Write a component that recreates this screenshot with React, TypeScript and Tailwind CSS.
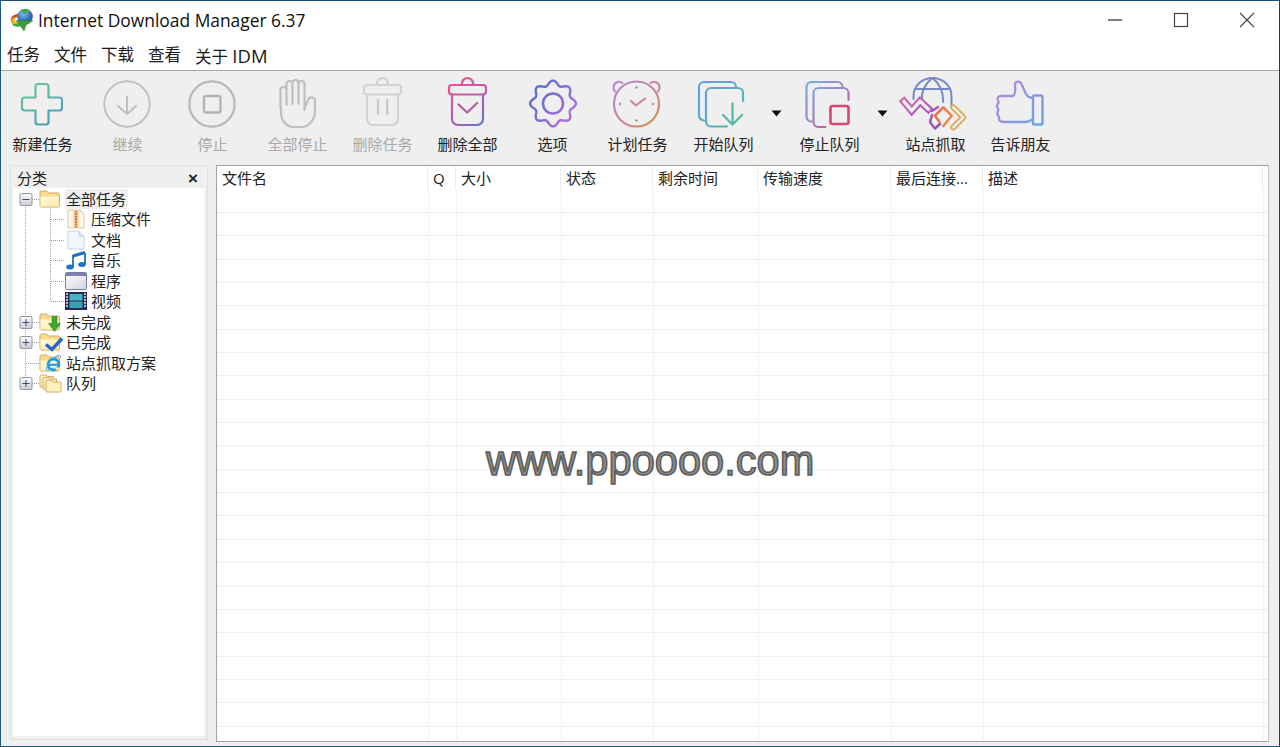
import React from "react";

const SANS = "[font-family:'Open_Sans','Noto_Sans_CJK_SC',sans-serif]";

function Grad({ id, a, b, c }: { id: string; a: string; b: string; c?: string }) {
  return (
    <defs>
      <linearGradient id={id} gradientUnits="userSpaceOnUse" x1="6" y1="4" x2="54" y2="52">
        <stop offset="0" stopColor={a} />
        {c ? <stop offset="0.5" stopColor={c} /> : null}
        <stop offset="1" stopColor={b} />
      </linearGradient>
    </defs>
  );
}

function Ico({ children, dx = 0 }: { children: React.ReactNode; dx?: number }) {
  return (
    <svg width="60" height="56" viewBox={`${-dx} 0 60 56`} fill="none" strokeLinecap="round" strokeLinejoin="round" className="overflow-visible">
      {children}
    </svg>
  );
}

const PlusIcon = () => (
  <Ico dx={-1}>
    <defs>
      <linearGradient id="gPlus" gradientUnits="userSpaceOnUse" x1="15" y1="8" x2="40" y2="50">
        <stop offset="0" stopColor="#6cc6a0" />
        <stop offset="1" stopColor="#4a9db8" />
      </linearGradient>
    </defs>
    <path
      d="M26 8h8a2.5 2.5 0 0 1 2.5 2.5V21.5H47.5a2.5 2.5 0 0 1 2.5 2.5v8a2.5 2.5 0 0 1-2.5 2.5H36.5V46a2.5 2.5 0 0 1-2.5 2.5h-8a2.5 2.5 0 0 1-2.5-2.5V34.5H12.5A2.5 2.5 0 0 1 10 32v-8a2.5 2.5 0 0 1 2.5-2.5H23.5V10.5A2.5 2.5 0 0 1 26 8z"
      stroke="url(#gPlus)"
      strokeWidth="2.2"
    />
  </Ico>
);

const ResumeIcon = () => (
  <Ico dx={-1}>
    <circle cx="30" cy="28" r="22.7" stroke="#c2c2c2" strokeWidth="2" />
    <path d="M30 20.5V38M21 30l9 8 9-8" stroke="#bfbfbf" strokeWidth="2" />
  </Ico>
);

const StopIcon = () => (
  <Ico dx={-0.5}>
    <circle cx="29.5" cy="28" r="22.7" stroke="#b8b8b8" strokeWidth="2.2" />
    <rect x="21.5" y="20" width="16.5" height="16.5" rx="2" stroke="#b5b5b5" strokeWidth="2.4" />
  </Ico>
);

const HandIcon = () => (
  <Ico dx={-1}>
    <path
      d="M13.5 33V14a3 3 0 0 1 6 0V29M19.5 14V8a3 3 0 0 1 6 0V28M25.5 8V7a3 3 0 0 1 6 0V28M31.5 8a3 3 0 0 1 6 0V29M37.5 11V34M37.5 32l4-9c1.200-2.600 6.500-2 6.500 1.500V35c0 9-6 16-14 16h-7c-7 0-13-6-13-14V31"
      stroke="#bfbfbf"
      strokeWidth="2.2"
    />
  </Ico>
);

const TrashLines = ({ stroke, width = 2.2 }: { stroke: string; width?: number }) => (
  <>
    <path d="M24.500 8.500v-1a5.500 5.500 0 0 1 11 0v1" stroke={stroke} strokeWidth={width} />
    <rect x="11.500" y="9" width="37" height="9.500" rx="3" stroke={stroke} strokeWidth={width} />
    <path d="M14.500 18.500V43a6 6 0 0 0 6 6h19a6 6 0 0 0 6-6V18.500" stroke={stroke} strokeWidth={width} />
  </>
);

const TrashIcon = () => (
  <Ico dx={-0.5}>
    <TrashLines stroke="#d2d2d2" />
    <path d="M25.500 24v14M34.700 24v14" stroke="#c8c8c8" strokeWidth="2.4" />
  </Ico>
);

const TrashAllIcon = () => (
  <Ico dx={-0.5}>
    <defs>
      <linearGradient id="gTrash" gradientUnits="userSpaceOnUse" x1="12" y1="6" x2="46" y2="50">
        <stop offset="0" stopColor="#f4508a" />
        <stop offset="0.5" stopColor="#bc5cae" />
        <stop offset="1" stopColor="#5c78cc" />
      </linearGradient>
    </defs>
    <TrashLines stroke="url(#gTrash)" />
    <path d="M21 28.500l8.700 8 10-9.500" stroke="#b25ca8" strokeWidth="2.200" />
  </Ico>
);

function gearPath() {
  const pts: string[] = [];
  for (let i = 0; i <= 192; i++) {
    const t = (i / 192) * Math.PI * 2;
    const r = 20.6 + 2.3 * Math.cos(8 * t);
    pts.push(`${(30 + r * Math.cos(t)).toFixed(2)} ${(27.5 + r * Math.sin(t)).toFixed(2)}`);
  }
  return "M" + pts.join("L") + "Z";
}

const GearIcon = () => (
  <Ico>
    <defs>
      <linearGradient id="gGear" gradientUnits="userSpaceOnUse" x1="6" y1="10" x2="54" y2="46">
        <stop offset="0" stopColor="#4f70c0" />
        <stop offset="1" stopColor="#bb70e4" />
      </linearGradient>
    </defs>
    <path d={gearPath()} stroke="url(#gGear)" strokeWidth="2.4" />
    <circle cx="30" cy="27.500" r="10" stroke="url(#gGear)" strokeWidth="2.600" />
  </Ico>
);

const ClockIcon = () => (
  <Ico dx={-1.5}>
    <defs>
      <linearGradient id="gClock" gradientUnits="userSpaceOnUse" x1="8" y1="4" x2="52" y2="52">
        <stop offset="0" stopColor="#b588d8" />
        <stop offset="0.55" stopColor="#c58a9c" />
        <stop offset="1" stopColor="#d99045" />
      </linearGradient>
    </defs>
    <circle cx="30" cy="28" r="22.500" stroke="url(#gClock)" strokeWidth="2.200" />
    <path d="M8.500 15.500a5.500 5.500 0 0 1-1.500-5 5.600 5.600 0 0 1 9-3.500M44 7a5.600 5.600 0 0 1 9 3.500 5.500 5.500 0 0 1-1.500 5" stroke="url(#gClock)" strokeWidth="2.200" />
    <path d="M24.500 25l5 4.500 9-7" stroke="#c58a9c" strokeWidth="2.200" />
    <circle cx="30" cy="11.500" r="1.200" fill="#b88ab8" />
    <circle cx="30" cy="44.500" r="1.200" fill="#c88a80" />
    <circle cx="13.500" cy="28" r="1.200" fill="#b98ab8" />
    <circle cx="46.500" cy="28" r="1.200" fill="#c88a80" />
  </Ico>
);

const StartQueueIcon = () => (
  <Ico>
    <Grad id="gStart" a="#5fa0e2" b="#52bca0" />
    <path d="M10 44.500a5 5 0 0 1-5-5V11a5 5 0 0 1 5-5h27a5 5 0 0 1 5 5" stroke="url(#gStart)" strokeWidth="2.200" />
    <path d="M33 50.500H17a5 5 0 0 1-5-5V17a5 5 0 0 1 5-5h27a5 5 0 0 1 5 5v8" stroke="url(#gStart)" strokeWidth="2.200" />
    <path d="M38.500 27.500V48M29 39l9.500 9.500L48 39" stroke="#55b8a2" strokeWidth="2.200" />
  </Ico>
);

const StopQueueIcon = () => (
  <Ico dx={-0.5}>
    <defs>
      <linearGradient id="gStopQ" gradientUnits="userSpaceOnUse" x1="6" y1="4" x2="50" y2="52">
        <stop offset="0" stopColor="#6fb2e6" />
        <stop offset="0.5" stopColor="#a086c4" />
        <stop offset="1" stopColor="#e0406e" />
      </linearGradient>
    </defs>
    <path d="M12 45.500a5 5 0 0 1-5-5V11a5 5 0 0 1 5-5h26a5 5 0 0 1 5 5" stroke="url(#gStopQ)" strokeWidth="2.200" />
    <path d="M49 24v-7a5 5 0 0 0-5-5H19a5 5 0 0 0-5 5v29a5 5 0 0 0 5 5h7" stroke="url(#gStopQ)" strokeWidth="2.200" />
    <rect x="31" y="30" width="18" height="18" rx="2" stroke="#d8466f" strokeWidth="2.600" />
  </Ico>
);

const GrabberIcon = () => (
  <Ico dx={-1}>
    <defs>
      <linearGradient id="gZig" gradientUnits="userSpaceOnUse" x1="0" y1="22" x2="32" y2="52">
        <stop offset="0" stopColor="#cc64b4" />
        <stop offset="1" stopColor="#9a50bc" />
      </linearGradient>
      <linearGradient id="gChev" gradientUnits="userSpaceOnUse" x1="30" y1="32" x2="60" y2="52">
        <stop offset="0" stopColor="#ee6448" />
        <stop offset="1" stopColor="#e2ae58" />
      </linearGradient>
    </defs>
    <path d="M8.500 23V20a19 18 0 0 1 38 0V31M27.500 2C21 7 16.700 15 16.700 23M27.500 2C34 7 38.300 16 38.300 26M11.700 13H43.300" stroke="#7488c8" strokeWidth="2" />
    <path d="M-1 25.500L6.700 34.700 15 25.300 23.300 33" stroke="url(#gZig)" strokeWidth="7.500" strokeLinecap="square" strokeLinejoin="miter" />
    <path d="M-1 25.500L6.700 34.700 15 25.300 23.300 33" stroke="#efefef" strokeWidth="3.400" strokeLinecap="square" strokeLinejoin="miter" />
    <path d="M27 35L33 31M27 39L25 46.300 30 52.500 35 48" stroke="url(#gZig)" strokeWidth="2.500" />
    <path d="M48.300 31.300L58.300 41.300 48.300 51.300" stroke="#e0a858" strokeWidth="6" />
    <path d="M48.300 31.300L58.300 41.300 48.300 51.300" stroke="#efefef" strokeWidth="2.400" />
    <path d="M34.500 46L30 39.700 38.300 31.300 46.700 39.700 38.300 50" stroke="url(#gChev)" strokeWidth="2.500" />
  </Ico>
);

const ThumbIcon = () => (
  <Ico dx={-1}>
    <defs>
      <linearGradient id="gThumb" gradientUnits="userSpaceOnUse" x1="8" y1="8" x2="54" y2="46">
        <stop offset="0" stopColor="#bb88d4" />
        <stop offset="1" stopColor="#66a4ea" />
      </linearGradient>
    </defs>
    <rect x="43" y="19.500" width="9.500" height="29" rx="1.500" stroke="url(#gThumb)" strokeWidth="2.400" />
    <path
      d="M43 21.500c-3.500 1-5.500-.5-7.500-4.500l-4-9c-1.500-3.500-6.500-3-6.500 1 0 4 1.500 8-2 11H11c-3 0-4 2.500-3 5 1 1 1 1.500 0 2.500-1.500 2-1 4 0 5 .5 1 .5 1.500 0 2.500-1 2-.5 4 .5 5 .5 1 .5 1.500 .5 2.500 0 2 2 3.500 5 3.500H35c4 0 5-1.500 8-3"
      stroke="url(#gThumb)"
      strokeWidth="2.300"
    />
  </Ico>
);

function ToolItem({ label, icon, disabled, first }: { label: string; icon: React.ReactNode; disabled?: boolean; first?: boolean }) {
  return (
    <div className={`w-[85px] shrink-0 flex flex-col items-center ${first ? "ml-[1px]" : ""}`}>
      {icon}
      <span className={`mt-[1px] text-[15px] leading-[22px] whitespace-nowrap ${disabled ? "text-[#a9a9a9]" : "text-[#222]"}`}>{label}</span>
    </div>
  );
}

function DropArrow() {
  return (
    <div className="w-[21px] shrink-0 flex justify-center pt-[34px]">
      <svg width="12" height="7" viewBox="0 0 12 7" className="-translate-x-[0.5px]"><path d="M1 0.500h10L6 6.500z" fill="#111" /></svg>
    </div>
  );
}

const FolderBase = () => (
  <>
    <path d="M1 16V3.500A1.500 1.500 0 0 1 2.500 2h5l2 2h9.500A1.500 1.500 0 0 1 20.500 5.500V16.500a1.500 1.500 0 0 1-1.500 1.500h-16A1.500 1.500 0 0 1 1 16.500z" fill="#f7dc8e" stroke="#cfa85e" />
    <path d="M1.500 7.500h18.500v9.500a.5.5 0 0 1-.5.5h-17.500a.5.5 0 0 1-.5-.5z" fill="url(#gFolderFront)" />
    <defs>
      <linearGradient id="gFolderFront" x1="0" y1="0" x2="1" y2="1">
        <stop offset="0" stopColor="#fffbe2" />
        <stop offset="1" stopColor="#fbe9a4" />
      </linearGradient>
    </defs>
  </>
);

const TreeSvg = ({ children, w = 22 }: { children: React.ReactNode; w?: number }) => (
  <svg width={w} height="20" viewBox={`0 0 ${w} 20`} className="shrink-0 overflow-visible">{children}</svg>
);

const FolderIcon = () => <TreeSvg><FolderBase /></TreeSvg>;

const DownFolder = () => (
  <TreeSvg>
    <FolderBase />
    <path d="M13 4.500h5v7h3.500L15.500 19.500l-6-8H13z" fill="#3fa535" stroke="#2c7d26" strokeWidth="0.500" />
  </TreeSvg>
);

const DoneFolder = () => (
  <TreeSvg>
    <FolderBase />
    <path d="M7 12.500l6 5L23 6.500" fill="none" stroke="#2d62c8" strokeWidth="3.400" />
  </TreeSvg>
);

const IeFolder = () => (
  <TreeSvg>
    <FolderBase />
    <circle cx="14.500" cy="11.500" r="5.400" fill="none" stroke="#1f96e0" strokeWidth="2.800" />
    <path d="M9 11.800h11" stroke="#1f96e0" strokeWidth="2" />
    <path d="M16.500 15.500h6" stroke="#fbe9a4" strokeWidth="2.200" />
    <path d="M21 5c1.500-2 0-3.500-3-2-5 2.500-9 7-10.500 12-.5 2 .5 3 3 2" stroke="#3fa8ea" fill="none" />
  </TreeSvg>
);

const StackFolder = () => (
  <TreeSvg>
    <path d="M1 3.500A1.500 1.500 0 0 1 2.500 2h5l1 1.500h6V14H1z" fill="#fbeeb8" stroke="#d3ac62" />
    <path d="M4 6A1.500 1.500 0 0 1 5.500 4.500h5l1 1.500h6V16H4z" fill="#fbeeb8" stroke="#d3ac62" />
    <path d="M7 8A1 1 0 0 1 8 7h4l2 2h7a1 1 0 0 1 1 1v8a1 1 0 0 1-1 1H8a1 1 0 0 1-1-1z" fill="#fff3bd" stroke="#d3ac62" />
  </TreeSvg>
);

const ZipIcon = () => (
  <TreeSvg w={20}>
    <path d="M2 1H14l4 4v14H2z" fill="#fff8ea" stroke="#d9c6a2" />
    <path d="M7.500 1.500h5V19h-5z" fill="#f0c890" />
    <path d="M10 2v16" stroke="#c7642c" strokeWidth="1.800" strokeDasharray="1.500 1" />
  </TreeSvg>
);

const DocIcon = () => (
  <TreeSvg w={20}>
    <path d="M2 1h11l5 5V19H2z" fill="#f3f6fc" stroke="#c6d0e2" />
    <path d="M13 1v5h5" fill="#dfe6f2" stroke="#c6d0e2" />
  </TreeSvg>
);

const MusicIcon = () => (
  <TreeSvg w={20}>
    <path d="M7 6l12-3.500" fill="none" stroke="#1f6fc0" strokeWidth="3" />
    <path d="M7 5v12M19 3v11" fill="none" stroke="#1f6fc0" strokeWidth="1.800" />
    <ellipse cx="4" cy="17" rx="3.800" ry="2.500" fill="#1b76c8" />
    <ellipse cx="16" cy="14.500" rx="3.800" ry="2.500" fill="#1b76c8" />
  </TreeSvg>
);

const ProgIcon = () => (
  <TreeSvg>
    <defs>
      <linearGradient id="gProg" x1="0" y1="0" x2="1" y2="1">
        <stop offset="0" stopColor="#ffffff" />
        <stop offset="1" stopColor="#d4d4e0" />
      </linearGradient>
    </defs>
    <rect x="0.500" y="1.500" width="21" height="17" rx="1" fill="url(#gProg)" stroke="#7a7aa0" />
    <rect x="1" y="2" width="20" height="3" fill="#7a80b0" />
  </TreeSvg>
);

const FilmIcon = () => (
  <TreeSvg>
    <rect x="0" y="1" width="22" height="18" fill="#2a2a5a" />
    <rect x="4.500" y="3" width="13" height="6.500" fill="#45b5c0" />
    <rect x="4.500" y="10.500" width="13" height="6.500" fill="#36a4b0" />
    <path d="M1 3h2M1 6h2M1 9h2M1 12h2M1 15h2M19 3h2M19 6h2M19 9h2M19 12h2M19 15h2" stroke="#d8e4f0" strokeWidth="1.300" />
  </TreeSvg>
);

function Guide({ level, expander, end, lastChild }: { level: 0 | 1; expander?: "plus" | "minus"; end?: boolean; lastChild?: boolean }) {
  const w = level === 0 ? 25 : 51;
  const dot = { stroke: "#a3a3a3", strokeWidth: 1, strokeDasharray: "1 1", fill: "none" };
  return (
    <svg width={w} height="20.5" viewBox={`0 0 ${w} 20.5`} className="shrink-0">
      <path d={end ? "M11.500 0V10" : level === 0 && expander === "minus" ? "M11.500 10V20.5" : "M11.500 0V20.5"} {...dot} />
      {level === 0 ? <path d="M12 10.500H25" {...dot} /> : <path d={`M36.500 0V${lastChild ? 10.5 : 20.5}M37 10.500H51`} {...dot} />}
      {expander ? (
        <>
          <defs>
            <linearGradient id="gBox" x1="0" y1="0" x2="0" y2="1">
              <stop offset="0" stopColor="#ffffff" />
              <stop offset="1" stopColor="#c8ccd4" />
            </linearGradient>
          </defs>
          <rect x="6" y="4.500" width="12" height="12" rx="1.500" fill="url(#gBox)" stroke="#8f949e" />
          <path d={expander === "plus" ? "M8.500 10.500h7M12 7v7" : "M8.500 10.500h7"} stroke="#34507a" strokeWidth="1" />
        </>
      ) : null}
    </svg>
  );
}

function TreeRow({ level, expander, end, lastChild, icon, label, selected }: { level: 0 | 1; expander?: "plus" | "minus"; end?: boolean; lastChild?: boolean; icon: React.ReactNode; label: string; selected?: boolean }) {
  return (
    <div className="flex items-center h-[20.5px]">
      <Guide level={level} expander={expander} end={end} lastChild={lastChild} />
      <div className={`${level === 0 ? "w-[22px]" : "w-[21px]"} shrink-0 flex justify-center`}>{icon}</div>
      <span className={`ml-[4px] pl-[1px] pr-[2px] text-[15px] leading-[20px] text-[#222] whitespace-nowrap ${selected ? "bg-[#f0f0f0]" : ""}`}>{label}</span>
    </div>
  );
}

const cols = [
  { w: "w-[211px]", t: "文件名" },
  { w: "w-[28px]", t: "Q" },
  { w: "w-[105px]", t: "大小" },
  { w: "w-[92px]", t: "状态" },
  { w: "w-[105px]", t: "剩余时间" },
  { w: "w-[133px]", t: "传输速度" },
  { w: "w-[92px]", t: "最后连接..." },
  { w: "w-[280px]", t: "描述" },
];

function Logo() {
  return (
    <svg width="24" height="24" viewBox="0 0 24 24" className="shrink-0">
      <defs>
        <radialGradient id="gGlobe" cx="0.4" cy="0.3" r="0.8">
          <stop offset="0" stopColor="#8cc0ee" />
          <stop offset="0.6" stopColor="#2f6bb5" />
          <stop offset="1" stopColor="#1c4f96" />
        </radialGradient>
      </defs>
      <path d="M9 6C3 6 0 10 1 14c.8 3 4 4.500 8 4l4-4c-4 1-7 .5-8-1-1-2 1-4 5-4z" fill="#e8b020" />
      <path d="M9 6C3 6 0 10 1 14c-.5-3 3-6 9-5.500z" fill="#d23b2a" />
      <path d="M2 16.500c2 2 5 2.500 8 2l3-4c-4 1-8 1.500-11 2z" fill="#42a845" />
      <circle cx="15" cy="8.500" r="7.800" fill="url(#gGlobe)" />
      <path d="M12 2c2-1.500 5-1.500 7 0 1 2-1 3-3 3-1 2.500-4 1.500-4-3z" fill="#4aa84a" />
      <path d="M6 12.500h17l-7 4.500-2 6-3.500-5z" fill="#3c9a3a" stroke="#2a7d2c" strokeWidth="0.500" />
    </svg>
  );
}

export default function App() {
  return (
    <div className={`w-[1280px] h-[747px] flex flex-col bg-[#efefef] border border-[#1c5a80] border-r-[#1c3f66] border-t-[#1c4a70] overflow-hidden ${SANS}`}>
      <div className="h-[38px] bg-white flex items-center pl-[9px] shrink-0">
        <Logo />
        <span className="ml-[4px] mt-[1px] text-[17.400px] text-[#111] whitespace-nowrap">Internet Download Manager 6.37</span>
        <div className="ml-auto flex items-center">
          <svg width="16" height="16" viewBox="0 0 16 16" className="mr-[50px]"><path d="M1 8h14" stroke="#555" strokeWidth="1.500" /></svg>
          <svg width="16" height="16" viewBox="0 0 16 16" className="mr-[50px]"><rect x="1.500" y="1.500" width="13" height="13" fill="none" stroke="#444" strokeWidth="1.200" /></svg>
          <svg width="16" height="16" viewBox="0 0 16 16" className="mr-[24px]"><path d="M1 1l14 14M15 1L1 15" stroke="#444" strokeWidth="1.100" /></svg>
        </div>
      </div>
      <div className="h-[32px] bg-white flex items-center pl-[6px] pt-[2px] gap-[14px] border-b border-[#a6a6a6] shrink-0 text-[16.500px] text-[#1a1a1a]">
        <span>任务</span>
        <span>文件</span>
        <span>下载</span>
        <span>查看</span>
        <span>关于 <span className="text-[18.500px]">IDM</span></span>
      </div>
      <div className="h-[94px] shrink-0 flex pt-[5px] -ml-[1px]">
        <ToolItem label="新建任务" icon={<PlusIcon />} />
        <ToolItem label="继续" icon={<ResumeIcon />} disabled />
        <ToolItem label="停止" icon={<StopIcon />} disabled />
        <ToolItem label="全部停止" icon={<HandIcon />} disabled />
        <ToolItem label="删除任务" icon={<TrashIcon />} disabled />
        <ToolItem label="删除全部" icon={<TrashAllIcon />} />
        <ToolItem label="选项" icon={<GearIcon />} />
        <ToolItem label="计划任务" icon={<ClockIcon />} />
        <ToolItem label="开始队列" icon={<StartQueueIcon />} first />
        <DropArrow />
        <ToolItem label="停止队列" icon={<StopQueueIcon />} />
        <DropArrow />
        <ToolItem label="站点抓取" icon={<GrabberIcon />} />
        <ToolItem label="告诉朋友" icon={<ThumbIcon />} />
      </div>
      <div className="flex-1 min-h-0 flex pl-[9px] pr-[10px] pb-[4px] gap-[8px]">
        <div className="w-[198px] shrink-0 mb-[2px] border border-[#e0e0e0] px-[2px] pb-[3px] flex flex-col">
          <div className="h-[22px] shrink-0 flex items-center justify-between pl-[4px] pr-[7px] pt-[2px] text-[15px] text-[#222]">
            <span>分类</span>
            <span className="font-bold text-[17px] leading-none [font-family:'Liberation_Sans',sans-serif]">×</span>
          </div>
          <div className="flex-1 bg-white border-r-[1px] border-[#f6f6f6] pl-[1px] pt-[0.5px]">
            <TreeRow level={0} expander="minus" icon={<FolderIcon />} label="全部任务" selected />
            <TreeRow level={1} icon={<ZipIcon />} label="压缩文件" />
            <TreeRow level={1} icon={<DocIcon />} label="文档" />
            <TreeRow level={1} icon={<MusicIcon />} label="音乐" />
            <TreeRow level={1} icon={<ProgIcon />} label="程序" />
            <TreeRow level={1} lastChild icon={<FilmIcon />} label="视频" />
            <TreeRow level={0} expander="plus" icon={<DownFolder />} label="未完成" />
            <TreeRow level={0} expander="plus" icon={<DoneFolder />} label="已完成" />
            <TreeRow level={0} icon={<IeFolder />} label="站点抓取方案" />
            <TreeRow level={0} expander="plus" end icon={<StackFolder />} label="队列" />
          </div>
        </div>
        <div className="relative flex-1 min-w-0 bg-white border border-[#a2a2a2] border-r-[#c4c4c4] flex flex-col overflow-hidden">
          <div className="flex h-[24px] shrink-0">
            {cols.map((c) => (
              <div key={c.t} className={`${c.w} shrink-0 border-r border-[#ececec] pl-[5px] text-[15px] leading-[24px] text-[#222] whitespace-nowrap`}>
                {c.t}
              </div>
            ))}
          </div>
          <div className="flex h-[23px] shrink-0 border-b border-[#efefef]">
            {cols.map((c) => (
              <div key={c.t} className={`${c.w} shrink-0 border-r border-[#f2f2f2] translate-x-[1px]`} />
            ))}
          </div>
          {Array.from({ length: 23 }).map((_, i) => (
            <div key={i} className="flex h-[23.350px] shrink-0 border-b border-[#efefef]">
              {cols.map((c) => (
                <div key={c.t} className={`${c.w} shrink-0 border-r border-[#f2f2f2] translate-x-[1px]`} />
              ))}
            </div>
          ))}
          <div className="absolute left-[269px] top-[270px] text-[41.600px] leading-[50px] text-[#8c8c8c] whitespace-nowrap [font-family:'Liberation_Sans',sans-serif] [-webkit-text-stroke:1.500px_#5c5c5c]">
            www.ppoooo.com
          </div>
        </div>
      </div>
    </div>
  );
}
